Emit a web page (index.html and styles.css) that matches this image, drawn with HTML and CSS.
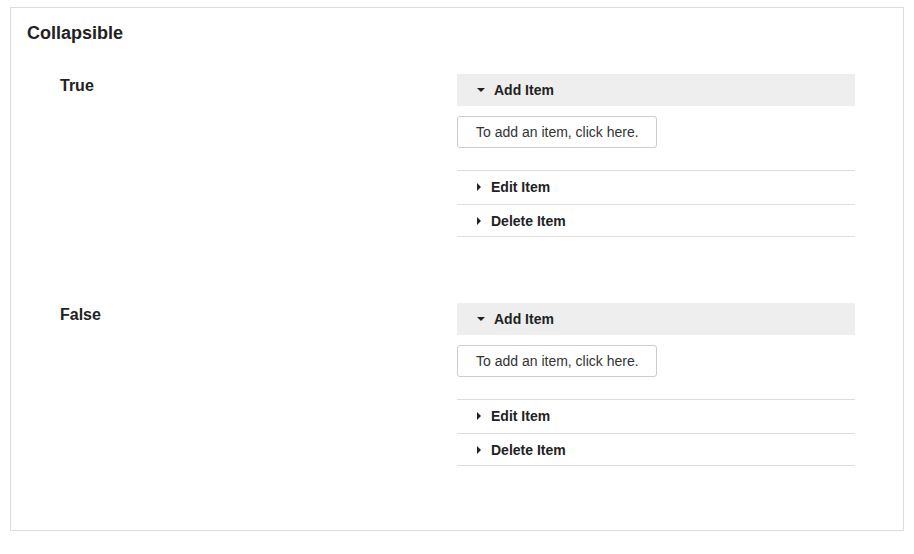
FILE: index.html
```html
<!DOCTYPE html>
<html>
<head>
<meta charset="utf-8">
<link rel="stylesheet" href="styles.css">
</head>
<body>
<div class="panel">
  <h2 class="title">Collapsible</h2>
  <div class="section">
    <div class="label">True</div>
    <div class="accordion">
      <div class="head open"><span class="caret-down"></span>Add Item</div>
      <div class="body"><button class="btn">To add an item, click here.</button></div>
      <div class="row first"><span class="caret-right"></span>Edit Item</div>
      <div class="row last"><span class="caret-right"></span>Delete Item</div>
    </div>
  </div>
  <div class="section">
    <div class="label">False</div>
    <div class="accordion">
      <div class="head open"><span class="caret-down"></span>Add Item</div>
      <div class="body"><button class="btn">To add an item, click here.</button></div>
      <div class="row first"><span class="caret-right"></span>Edit Item</div>
      <div class="row last"><span class="caret-right"></span>Delete Item</div>
    </div>
  </div>
</div>
</body>
</html>
```
FILE: styles.css
```css
html, body {
  margin: 0;
  padding: 0;
  background: #fff;
  font-family: "Liberation Sans", Arial, sans-serif;
  color: #333;
}
.panel {
  margin: 7px 0 0 10px;
  width: 894px;
  height: 524px;
  box-sizing: border-box;
  border: 1px solid #ddd;
  padding: 14px 16px 0 16px;
}
.title {
  margin: 0 0 30px 0;
  font-size: 18px;
  line-height: 22px;
  font-weight: bold;
  color: #222;
}
.section {
  display: flex;
  margin-left: 33px;
  margin-bottom: 66px;
}
.label {
  width: 397px;
  font-size: 16px;
  line-height: 24px;
  font-weight: bold;
  color: #222;
}
.accordion {
  width: 398px;
}
.head {
  height: 32px;
  line-height: 32px;
  background: #eee;
  font-size: 14px;
  font-weight: bold;
  padding-left: 20px;
  display: flex;
  align-items: center;
  color: #222;
}
.caret-down {
  display: inline-block;
  width: 0;
  height: 0;
  border-left: 4px solid transparent;
  border-right: 4px solid transparent;
  border-top: 4px solid #222;
  margin-right: 9px;
}
.body {
  padding: 10px 0 22px 0;
}
.btn {
  display: block;
  width: 200px;
  height: 32px;
  box-sizing: border-box;
  border: 1px solid #ccc;
  border-radius: 3px;
  background: #fff;
  font-family: "Liberation Sans", Arial, sans-serif;
  font-size: 14px;
  color: #333;
  padding: 0 0 0 18px;
  text-align: left;
  margin: 0;
}
.row {
  border-top: 1px solid #ddd;
  font-size: 14px;
  font-weight: bold;
  padding-left: 20px;
  display: flex;
  align-items: center;
  color: #222;
}
.row.first {
  height: 32px;
  padding-bottom: 1px;
}
.row.last {
  height: 31px;
  border-bottom: 1px solid #ddd;
}
.caret-right {
  display: inline-block;
  width: 0;
  height: 0;
  border-top: 4px solid transparent;
  border-bottom: 4px solid transparent;
  border-left: 4px solid #222;
  margin-right: 10px;
}
```
